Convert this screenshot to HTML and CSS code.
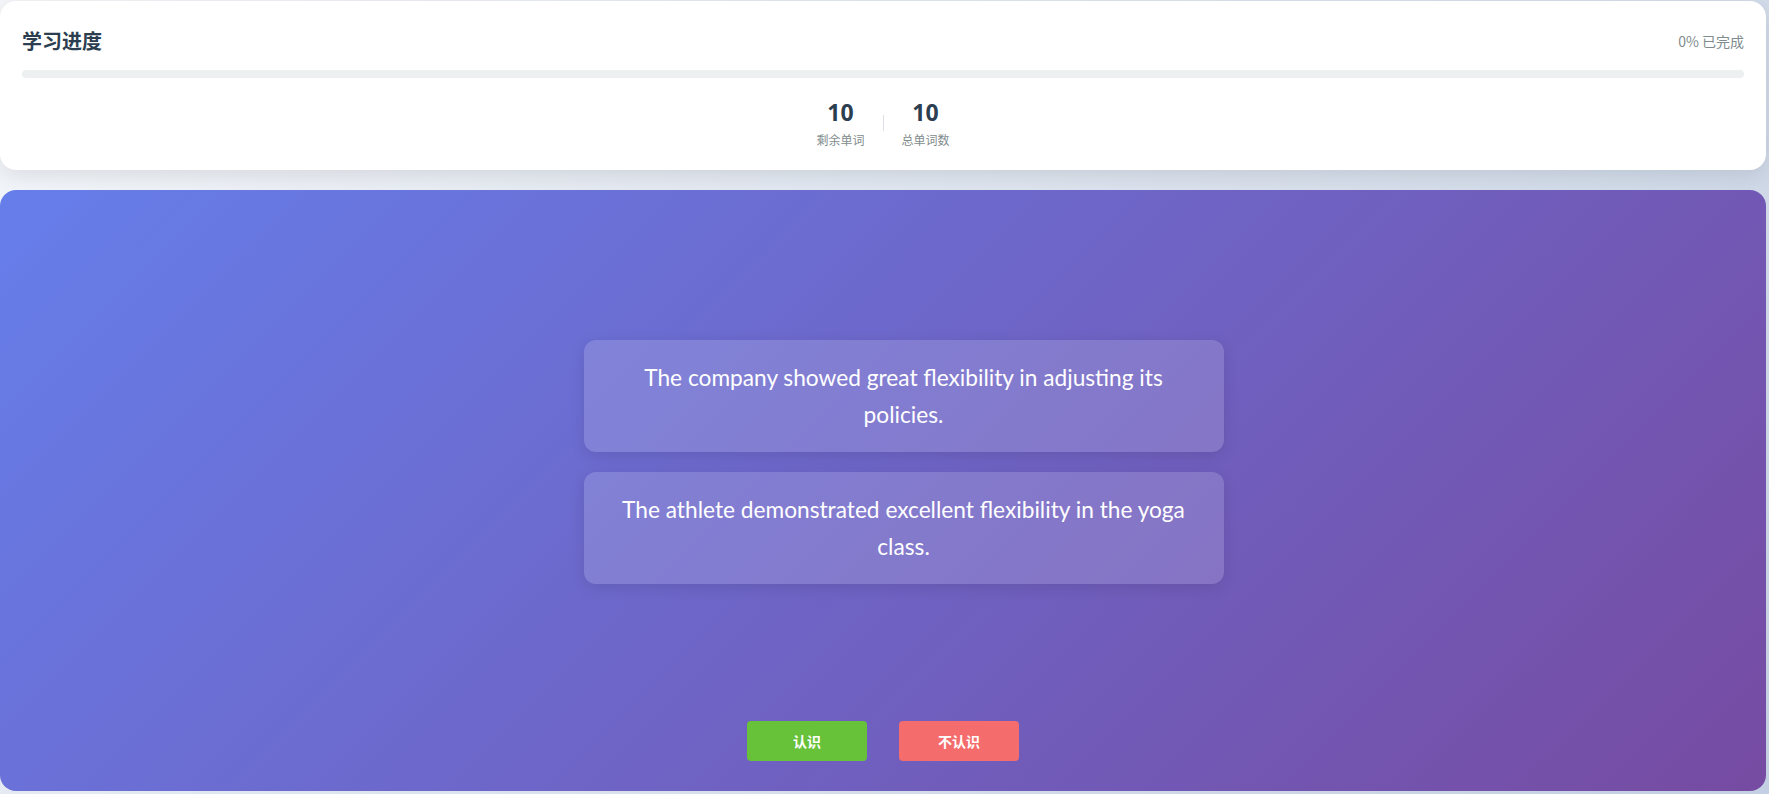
FILE: index.html
```html
<!DOCTYPE html>
<html lang="zh">
<head>
<meta charset="utf-8">
<title>学习进度</title>
<link rel="stylesheet" href="styles.css">
</head>
<body>
<div class="page">
  <section class="progress-card">
    <div class="progress-head">
      <h2 class="progress-title">学习进度</h2>
      <span class="progress-pct">0% 已完成</span>
    </div>
    <div class="progress-bar"><div class="progress-fill" style="width:0%"></div></div>
    <div class="stats">
      <div class="stat">
        <div class="stat-num">10</div>
        <div class="stat-label">剩余单词</div>
      </div>
      <div class="stat-divider"></div>
      <div class="stat">
        <div class="stat-num">10</div>
        <div class="stat-label">总单词数</div>
      </div>
    </div>
  </section>
  <section class="study-card">
    <div class="sentences">
      <div class="sentence">The company showed great flexibility in adjusting its policies.</div>
      <div class="sentence">The athlete demonstrated excellent flexibility in the yoga class.</div>
    </div>
    <div class="actions">
      <button class="btn btn-know">认识</button>
      <button class="btn btn-unknown">不认识</button>
    </div>
  </section>
</div>
</body>
</html>
```
FILE: styles.css
```css
html, body {
  margin: 0;
  padding: 0;
}
body {
  height: 794px;
  overflow: hidden;
  background: linear-gradient(135deg, #f5f7fa 0%, #c3cfe2 100%);
  font-family: "Noto Sans CJK SC", "Noto Sans", sans-serif;
}
.page {
  width: 1766px;
  padding-top: 1px;
  display: flex;
  flex-direction: column;
  gap: 20px;
}
.progress-card {
  background: #fff;
  border-radius: 16px;
  padding: 22px 22px 0;
  box-shadow: 0 5px 22px rgba(0, 0, 0, 0.1);
  height: 169px;
  box-sizing: border-box;
}
.progress-head {
  display: flex;
  justify-content: space-between;
  align-items: center;
  height: 36px;
}
.progress-title {
  margin: 0;
  font-size: 20px;
  font-weight: 700;
  color: #2c3e50;
  line-height: 36px;
}
.progress-pct {
  font-size: 14px;
  color: #7f8c8d;
}
.progress-bar {
  margin-top: 11px;
  height: 8px;
  border-radius: 4px;
  background: #ecf0f1;
  overflow: hidden;
}
.progress-fill {
  height: 100%;
  background: linear-gradient(90deg, #667eea, #764ba2);
}
.stats {
  display: flex;
  justify-content: center;
  align-items: center;
  margin-top: 18px;
}
.stat {
  display: flex;
  flex-direction: column;
  align-items: center;
  padding: 0 18px;
}
.stat-num {
  font-family: "Noto Sans", "Noto Sans CJK SC", sans-serif;
  font-size: 23px;
  font-weight: 700;
  color: #2c3e50;
  line-height: 32px;
}
.stat-label {
  font-size: 12px;
  color: #7f8c8d;
  line-height: 18px;
  margin-top: 3px;
}
.stat-divider {
  width: 1px;
  height: 16px;
  background: #dcdfe3;
}
.study-card {
  height: 601px;
  box-sizing: border-box;
  border-radius: 16px;
  background: linear-gradient(135deg, #667eea 0%, #764ba2 100%);
  display: flex;
  flex-direction: column;
  align-items: center;
  padding: 150px 0 30px;
}
.sentences {
  flex: 1;
  display: flex;
  flex-direction: column;
  gap: 20px;
  width: 640px;
  margin-left: 41px;
}
.sentence {
  background: rgba(255, 255, 255, 0.15);
  border-radius: 12px;
  box-shadow: 0 4px 15px rgba(0, 0, 0, 0.1);
  padding: 19px 20px;
  color: #fff;
  font-family: "Lato", "Noto Sans", sans-serif;
  font-size: 22.7px;
  line-height: 37px;
  text-align: center;
}
.actions {
  display: flex;
  gap: 32px;
}
.btn {
  width: 120px;
  height: 40px;
  border: none;
  border-radius: 4px;
  color: #fff;
  font-family: "Noto Sans CJK SC", sans-serif;
  font-size: 14px;
  font-weight: 700;
  cursor: pointer;
}
.btn-know {
  background: #67c23a;
}
.btn-unknown {
  background: #f56c6c;
}
```
